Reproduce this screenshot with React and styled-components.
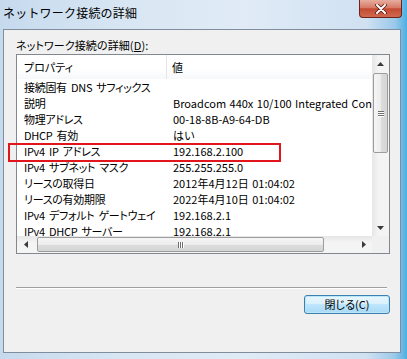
import React from 'react';
import styled, { createGlobalStyle } from 'styled-components';

const GlobalStyle = createGlobalStyle`
  html, body {
    margin: 0;
    padding: 0;
    background: #ffffff;
  }
  body {
    font-family: "Noto Sans CJK JP", "Noto Sans", sans-serif;
    color: #000;
  }
`;

const rows = [
  ['接続固有 DNS サフィックス', ''],
  ['説明', 'Broadcom 440x 10/100 Integrated Controller'],
  ['物理アドレス', '00-18-8B-A9-64-DB'],
  ['DHCP 有効', 'はい'],
  ['IPv4 IP アドレス', '192.168.2.100'],
  ['IPv4 サブネット マスク', '255.255.255.0'],
  ['リースの取得日', '2012年4月12日 01:04:02'],
  ['リースの有効期限', '2022年4月10日 01:04:02'],
  ['IPv4 デフォルト ゲートウェイ', '192.168.2.1'],
  ['IPv4 DHCP サーバー', '192.168.2.1'],
];

const Arrow = ({ dir }) => {
  const pts = {
    up: '0,4 3.5,0 7,4',
    down: '0,0 3.5,4 7,0',
    left: '4,0 0,3.5 4,7',
    right: '0,0 4,3.5 0,7',
  }[dir];
  const vertical = dir === 'up' || dir === 'down';
  return (
    <svg width={vertical ? 7 : 4} height={vertical ? 4 : 7} viewBox={vertical ? '0 0 7 4' : '0 0 4 7'}>
      <polygon points={pts} fill="#3a3a3a" />
    </svg>
  );
};

const App = () => {
  return (
    <>
      <GlobalStyle />
      <Window>
        <TitleBar>
          <Title>ネットワーク接続の詳細</Title>
          <CloseButton>
            <svg width="12" height="10" viewBox="0 0 12 10">
              <path d="M2 1 L10 9 M10 1 L2 9" stroke="#5a1a10" strokeWidth="3.6" strokeLinecap="round" />
              <path d="M2 1 L10 9 M10 1 L2 9" stroke="#ffffff" strokeWidth="2" strokeLinecap="round" />
            </svg>
          </CloseButton>
        </TitleBar>
        <Client>
          <Label>
            ネットワーク接続の詳細(<u>D</u>):
          </Label>
          <ListBox>
            <ListContent>
              <Header>
                <HeaderCell $first>プロパティ</HeaderCell>
                <HeaderCell>値</HeaderCell>
              </Header>
              {rows.map(([name, value]) => (
                <Row key={name}>
                  <NameCell>{name}</NameCell>
                  <ValueCell>{value}</ValueCell>
                </Row>
              ))}
            </ListContent>
            <VScroll>
              <ArrowButton $vertical>
                <Arrow dir="up" />
              </ArrowButton>
              <VThumb>
                <Grip $vertical>
                  <i />
                  <i />
                  <i />
                </Grip>
              </VThumb>
              <Spacer />
              <ArrowButton $vertical>
                <Arrow dir="down" />
              </ArrowButton>
            </VScroll>
            <HScroll>
              <ArrowButton>
                <Arrow dir="left" />
              </ArrowButton>
              <HThumb>
                <Grip>
                  <i />
                  <i />
                  <i />
                </Grip>
              </HThumb>
              <Spacer />
              <ArrowButton>
                <Arrow dir="right" />
              </ArrowButton>
            </HScroll>
            <Corner />
          </ListBox>
          <Separator />
          <DialogButton>閉じる(C)</DialogButton>
        </Client>
        <Highlight />
      </Window>
    </>
  );
};

export default App;

const Window = styled.div`
  position: relative;
  width: 407px;
  height: 359px;
  display: flex;
  flex-direction: column;
  background: linear-gradient(
    to right,
    #c6daee 0%,
    #d8e6f3 30%,
    #e0ebf6 60%,
    #d0e1f2 90%,
    #9bc9ea 97%,
    #4cafe2 100%
  );
`;

const TitleBar = styled.div`
  height: 29px;
  display: flex;
  align-items: flex-start;
`;

const Title = styled.div`
  padding: 4px 0 0 3px;
  font-size: 12px;
  line-height: 18px;
  color: #000;
  letter-spacing: 0.2px;
`;

const CloseButton = styled.div`
  margin-left: auto;
  margin-right: 5px;
  width: 43px;
  height: 18px;
  box-sizing: border-box;
  border: 1px solid #6e2418;
  border-top: none;
  border-radius: 0 0 4px 4px;
  background: linear-gradient(
    to bottom,
    #e6ae9f 0%,
    #d87a66 45%,
    #c34a33 52%,
    #cf6a50 100%
  );
  display: flex;
  align-items: center;
  justify-content: center;
`;

const Client = styled.div`
  flex: 1;
  margin: 0 6px 6px 3px;
  border: 1px solid #7f8d9c;
  background: #f0f0f0;
  display: flex;
  flex-direction: column;
  padding: 7px 10px 0 12px;
`;

const Label = styled.div`
  font-size: 11px;
  line-height: 16px;
  font-feature-settings: "palt";
  letter-spacing: 0.1px;
  margin-bottom: 1px;

  u {
    text-decoration: underline;
    text-underline-offset: 1px;
  }
`;

const ListBox = styled.div`
  width: 374px;
  height: 200px;
  box-sizing: border-box;
  border: 1px solid #828790;
  background: #ffffff;
  display: grid;
  grid-template-columns: 1fr 17px;
  grid-template-rows: 1fr 17px;
  overflow: hidden;
`;

const ListContent = styled.div`
  overflow: hidden;
  font-size: 11px;
`;

const Header = styled.div`
  display: grid;
  grid-template-columns: 150px 1fr;
  height: 24px;
  background: linear-gradient(to bottom, #ffffff 0%, #ffffff 60%, #f7f8fa 100%);
`;

const HeaderCell = styled.div`
  line-height: 24px;
  padding-left: ${(p) => (p.$first ? '7px' : '5px')};
  border-right: ${(p) => (p.$first ? '1px solid #e3e5e8' : 'none')};
  font-feature-settings: "palt";
`;

const Row = styled.div`
  display: grid;
  grid-template-columns: 150px 1fr;
  height: 16px;
  line-height: 16px;
`;

const NameCell = styled.div`
  padding-left: 7px;
  padding-right: 2px;
  white-space: nowrap;
  overflow: hidden;
  font-feature-settings: "palt";
  letter-spacing: -0.3px;
  word-spacing: 2px;
`;

const ValueCell = styled.div`
  padding-left: 6px;
  white-space: nowrap;
  overflow: hidden;
  letter-spacing: 0;
  word-spacing: 1px;
`;

const VScroll = styled.div`
  display: flex;
  flex-direction: column;
  background: linear-gradient(to right, #e6e6e6 0%, #f4f4f4 40%, #f4f4f4 100%);
`;

const HScroll = styled.div`
  display: flex;
  align-items: stretch;
  background: linear-gradient(to bottom, #e6e6e6 0%, #f4f4f4 40%, #f4f4f4 100%);
`;

const Corner = styled.div`
  background: #f0f0f0;
`;

const ArrowButton = styled.div`
  flex: 0 0 17px;
  display: flex;
  align-items: center;
  justify-content: center;
  ${(p) => (p.$vertical ? 'height: 17px;' : 'width: 17px;')}
`;

const Spacer = styled.div`
  flex: 1;
`;

const VThumb = styled.div`
  margin: 1px 1px 0;
  height: 80px;
  box-sizing: border-box;
  border: 1px solid #9c9c9c;
  border-radius: 2px;
  background: linear-gradient(
    to right,
    #f6f6f6 0%,
    #ececec 50%,
    #dcdcdc 51%,
    #d6d6d6 100%
  );
  display: flex;
  align-items: center;
  justify-content: center;
`;

const HThumb = styled.div`
  margin: 1px 0 1px 3px;
  width: 287px;
  box-sizing: border-box;
  border: 1px solid #9c9c9c;
  border-radius: 2px;
  background: linear-gradient(
    to bottom,
    #f6f6f6 0%,
    #ececec 50%,
    #dcdcdc 51%,
    #d6d6d6 100%
  );
  display: flex;
  align-items: center;
  justify-content: center;
`;

const Grip = styled.div`
  display: flex;
  flex-direction: ${(p) => (p.$vertical ? 'column' : 'row')};
  gap: 1px;

  i {
    display: block;
    background: #6e6e6e;
    box-shadow: ${(p) => (p.$vertical ? '0 1px 0 #fff' : '1px 0 0 #fff')};
    ${(p) => (p.$vertical ? 'width: 6px; height: 1px;' : 'width: 1px; height: 6px;')}
  }
`;

const Separator = styled.div`
  margin: 33px 3px 0 0;
  border-top: 1px solid #a0a0a0;
  border-bottom: 1px solid #ffffff;
`;

const DialogButton = styled.div`
  align-self: flex-end;
  margin-top: 6px;
  width: 86px;
  height: 19px;
  box-sizing: border-box;
  border: 1px solid #3c7fb1;
  border-radius: 3px;
  background: linear-gradient(
    to bottom,
    #eaf6fd 0%,
    #d9f0fc 48%,
    #bee6fd 50%,
    #a7d9f5 100%
  );
  box-shadow: inset 0 0 0 1px #b9e6f9;
  font-size: 11px;
  line-height: 17px;
  font-feature-settings: "palt";
  text-align: center;
`;

const Highlight = styled.div`
  position: absolute;
  left: 8px;
  top: 143px;
  width: 273px;
  height: 19px;
  box-sizing: border-box;
  border: 2px solid #e2141c;
`;
